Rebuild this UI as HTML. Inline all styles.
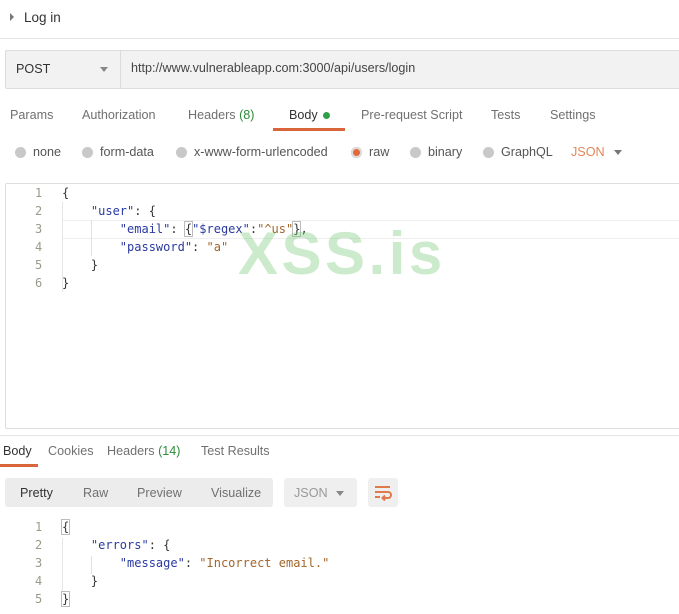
<!DOCTYPE html>
<html><head><meta charset="utf-8"><style>
body{margin:0;width:679px;height:614px;overflow:hidden;background:#fff;font-family:"Liberation Sans",sans-serif;font-size:12.6px;color:#505050;position:relative}
.a{position:absolute;white-space:pre}
.m{font-family:"DejaVu Sans Mono","Liberation Mono",monospace;font-size:12px}
.ln{color:#9a9a8a}
.k{color:#2a3aa0}
.s{color:#a3652a}
.r{position:absolute;width:11px;height:11px;border-radius:50%;background:#c8c8c8}
</style></head><body>
<div class="a" style="left:10px;top:13px;width:0;height:0;border-left:4px solid #777;border-top:4px solid transparent;border-bottom:4px solid transparent"></div>
<div class="a" style="left:24px;top:10px;font-size:13.5px;color:#333">Log in</div>
<div class="a" style="left:0;top:38px;width:679px;height:1px;background:#e6e6e6"></div>

<div class="a" style="left:5px;top:50px;width:680px;height:37px;background:#f1f2f1;border:1px solid #dcdcdc;border-radius:2px"></div>
<div class="a" style="left:120px;top:51px;width:1px;height:37px;background:#dcdcdc"></div>
<div class="a" style="left:16px;top:62px;color:#333">POST</div>
<div class="a" style="left:100px;top:67px;width:0;height:0;border-top:5px solid #888;border-left:4px solid transparent;border-right:4px solid transparent"></div>
<div class="a" style="left:131px;top:61px;color:#444">http://www.vulnerableapp.com:3000/api/users/login</div>

<div class="a" style="left:10px;top:108px;color:#707070">Params</div>
<div class="a" style="left:82px;top:108px;color:#707070">Authorization</div>
<div class="a" style="left:188px;top:108px;color:#707070">Headers <span style="color:#2e8b3a">(8)</span></div>
<div class="a" style="left:289px;top:108px;color:#333">Body</div>
<div class="r" style="left:323px;top:112px;width:7px;height:7px;background:#2fa04a"></div>
<div class="a" style="left:273px;top:128px;width:72px;height:3px;background:#d9663a"></div>
<div class="a" style="left:361px;top:108px;color:#707070">Pre-request Script</div>
<div class="a" style="left:491px;top:108px;color:#707070">Tests</div>
<div class="a" style="left:550px;top:108px;color:#707070">Settings</div>

<div class="r" style="left:15px;top:147px"></div><div class="a" style="left:33px;top:145px;color:#555">none</div>
<div class="r" style="left:82px;top:147px"></div><div class="a" style="left:100px;top:145px;color:#555">form-data</div>
<div class="r" style="left:176px;top:147px"></div><div class="a" style="left:194px;top:145px;color:#555">x-www-form-urlencoded</div>
<div class="r" style="left:351px;top:147px;background:#e06a3c;box-shadow:0 0 0 2px #ddd inset"></div><div class="a" style="left:369px;top:145px;color:#555">raw</div>
<div class="r" style="left:410px;top:147px"></div><div class="a" style="left:428px;top:145px;color:#555">binary</div>
<div class="r" style="left:483px;top:147px"></div><div class="a" style="left:501px;top:145px;color:#555">GraphQL</div>
<div class="a" style="left:571px;top:145px;color:#e0885a">JSON</div>
<div class="a" style="left:614px;top:150px;width:0;height:0;border-top:5px solid #777;border-left:4px solid transparent;border-right:4px solid transparent"></div>

<div class="a" style="left:5px;top:183px;width:680px;height:244px;border:1px solid #ddd;border-radius:2px"></div>
<div class="a" style="left:62px;top:220px;width:617px;height:17px;border-top:1px solid #eee;border-bottom:1px solid #eee"></div>
<div class="a" style="left:62px;top:202px;width:1px;height:90px;background:#e6e6e6"></div>
<div class="a" style="left:91px;top:220px;width:1px;height:36px;background:#e0e0e0"></div>
<div class="a m ln" style="left:35px;top:184px;line-height:18px">1
2
3
4
5
6</div>
<div class="a m" style="left:62px;top:184px;line-height:18px;color:#333">{
    <span class="k">"user"</span>: {
        <span class="k">"email"</span>: <span style="outline:1px solid #bbb">{</span><span class="k">"$regex"</span>:<span class="s">"^us"</span><span style="outline:1px solid #bbb">}</span>,
        <span class="k">"password"</span>: <span class="s">"a"</span>
    }
}</div>
<div class="a" style="left:238px;top:219px;font-size:60px;font-weight:bold;color:rgba(120,200,120,0.38);letter-spacing:3.5px">XSS.is</div>

<div class="a" style="left:0;top:435px;width:679px;height:1px;background:#e6e6e6"></div>
<div class="a" style="left:3px;top:444px;color:#333">Body</div>
<div class="a" style="left:0;top:464px;width:38px;height:3px;background:#d9663a"></div>
<div class="a" style="left:48px;top:444px;color:#707070">Cookies</div>
<div class="a" style="left:107px;top:444px;color:#707070">Headers <span style="color:#2e8b3a">(14)</span></div>
<div class="a" style="left:201px;top:444px;color:#707070">Test Results</div>

<div class="a" style="left:5px;top:478px;width:268px;height:29px;background:#ececec;border-radius:3px"></div>
<div class="a" style="left:20px;top:486px;color:#333">Pretty</div>
<div class="a" style="left:83px;top:486px;color:#707070">Raw</div>
<div class="a" style="left:137px;top:486px;color:#707070">Preview</div>
<div class="a" style="left:211px;top:486px;color:#707070">Visualize</div>
<div class="a" style="left:284px;top:478px;width:73px;height:29px;background:#efefef;border-radius:3px"></div>
<div class="a" style="left:294px;top:486px;color:#999">JSON</div>
<div class="a" style="left:336px;top:491px;width:0;height:0;border-top:5px solid #888;border-left:4px solid transparent;border-right:4px solid transparent"></div>
<div class="a" style="left:368px;top:478px;width:30px;height:29px;background:#efefef;border-radius:3px"></div>
<svg class="a" style="left:373px;top:484px" width="20" height="17" viewBox="0 0 20 17"><path d="M2 3H17M2 8H15a3 3 0 0 1 0 6H10M12 11.5l-2.5 2.5 2.5 2.5M2 13H7" stroke="#e07a4a" stroke-width="2" fill="none"/></svg>

<div class="a" style="left:62px;top:538px;width:1px;height:54px;background:#e6e6e6"></div>
<div class="a" style="left:91px;top:556px;width:1px;height:18px;background:#e0e0e0"></div>
<div class="a m ln" style="left:35px;top:518px;line-height:18px">1
2
3
4
5</div>
<div class="a m" style="left:62px;top:518px;line-height:18px;color:#333"><span style="outline:1px solid #bbb">{</span>
    <span class="k">"errors"</span>: {
        <span class="k">"message"</span>: <span class="s">"Incorrect email."</span>
    }
<span style="outline:1px solid #bbb">}</span></div>
</body></html>
